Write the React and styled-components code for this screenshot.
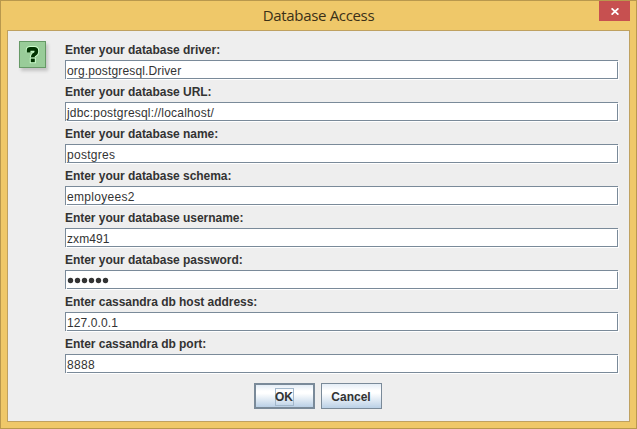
import React from 'react';
import styled, { createGlobalStyle } from 'styled-components';

const GlobalStyle = createGlobalStyle`
  * { box-sizing: border-box; }
  body { margin: 0; overflow: hidden; }
`;

const Window = styled.div`
  width: 637px;
  height: 429px;
  display: flex;
  flex-direction: column;
  padding: 0 6px 6px;
  background: #efc869;
  border: 1px solid #b9984d;
  font-family: "Liberation Sans", Arial, sans-serif;
  color: #333;
`;

const TitleBar = styled.header`
  display: grid;
  grid-template-columns: 31px 1fr 31px;
  height: 29px;
  flex: none;
`;

const Title = styled.h1`
  grid-column: 2;
  margin: 0;
  padding-top: 3px;
  text-align: center;
  font: 400 15px/22px "Open Sans", "Noto Sans", sans-serif;
  letter-spacing: -0.33px;
  color: #3b3018;
`;

const CloseButton = styled.button`
  display: flex;
  align-items: center;
  justify-content: center;
  width: 31px;
  height: 20px;
  padding: 1px 0 0 1px;
  border: 0;
  background: #c75050;
`;

const Dialog = styled.main`
  flex: 1;
  display: flex;
  flex-direction: column;
  padding: 10px 11px 0 11px;
  border: 1px solid #bfa160;
  background: #eee;
`;

const Content = styled.div`
  display: flex;
  gap: 19px;
`;

const IconBox = styled.div`
  width: 27px;
  height: 27px;
  flex: none;
  background: #99cc99;
  border: 1px solid #669966;
  box-shadow: 2px 3px 3px #c4c4c4;
  svg { display: block; }
`;

const Form = styled.div`
  flex: 1;
  display: flex;
  flex-direction: column;
`;

const Field = styled.label`
  display: flex;
  flex-direction: column;
  height: 42px;
`;

const Label = styled.span`
  height: 19px;
  padding-top: 1px;
  font-size: 12px;
  line-height: 17px;
  font-weight: 700;
  white-space: nowrap;
  letter-spacing: -0.035px;
`;

const Input = styled.div`
  position: relative;
  height: 19px;
  padding: 2px 0 0 1px;
  border: 1px solid #7a8a99;
  background: #fff;
  box-shadow: 1px 1px 0 #fff;
  font-size: 12px;
  line-height: 17px;
  white-space: nowrap;
  letter-spacing: ${(p) => p.$spacing}px;

  /* light notches where the bevel's two edges meet */
  &::before, &::after {
    content: "";
    position: absolute;
    width: 1px;
    height: 1px;
    background: #eee;
  }
  &::before { left: 0; bottom: -1px; }
  &::after { right: -1px; top: 0; }
`;

const Dots = styled.svg`
  display: block;
  margin-top: 2px;
`;

const Actions = styled.footer`
  display: flex;
  justify-content: center;
  gap: 6px;
  margin-top: 6px;
  padding-right: 2px;
`;

const Button = styled.button`
  display: flex;
  align-items: center;
  justify-content: center;
  width: 61px;
  height: 26px;
  padding: ${(p) => (p.$primary ? 1 : 2)}px 0 0;
  border: ${(p) => (p.$primary ? 2 : 1)}px solid #7a8a99;
  background: linear-gradient(#e4edf6 0%, #fff 28%, #fff 38%, #bad0e6 100%);
  font: 700 12px/15px "Liberation Sans", Arial, sans-serif;
  color: #333;
`;

const FocusRing = styled.span`
  display: flex;
  justify-content: center;
  width: 19px;
  height: 18px;
  line-height: 17px;
  border: 1px solid #a3b8cc;
`;

const fields = [
  { label: 'Enter your database driver:', value: 'org.postgresql.Driver', spacing: 0.14 },
  { label: 'Enter your database URL:', value: 'jdbc:postgresql://localhost/', spacing: 0.2 },
  { label: 'Enter your database name:', value: 'postgres', spacing: 0.28 },
  { label: 'Enter your database schema:', value: 'employees2', spacing: 0.3 },
  { label: 'Enter your database username:', value: 'zxm491', spacing: 0.1 },
  { label: 'Enter your database password:', secret: 6, spacing: 0 },
  { label: 'Enter cassandra db host address:', value: '127.0.0.1', spacing: 0.1 },
  { label: 'Enter cassandra db port:', value: '8888', spacing: 0.3 },
];

function PasswordDots({ count }) {
  return (
    <Dots width={count * 7 + 2} height="10">
      {Array.from({ length: count }, (_, i) => (
        <circle key={i} cx={3.5 + i * 7} cy="5.5" r="2.7" fill="#333" />
      ))}
    </Dots>
  );
}

function QuestionIcon() {
  const mark = 'M8.6 10.6V8.3Q8.6 6.9 10.4 6.9H14.2Q16.3 6.9 16.3 8.7V9.9Q16.3 11.3 14.8 12.2Q12.8 13.2 12.8 15.3';
  return (
    <svg width="25" height="25" viewBox="0 0 25 25" fill="none">
      <path d={mark} stroke="#ccffcc" strokeWidth="5.6" />
      <rect x="9.8" y="15.8" width="6" height="5.4" fill="#ccffcc" />
      <path d={mark} stroke="#003300" strokeWidth="3.7" />
      <rect x="10.8" y="16.6" width="4" height="3.6" fill="#003300" />
    </svg>
  );
}

export default function App() {
  return (
    <>
      <GlobalStyle />
      <Window>
        <TitleBar>
          <Title>Database Access</Title>
          <CloseButton aria-label="Close">
            <svg width="8" height="7" viewBox="0 0 8 7">
              <path d="M0.6 0.3L7.4 6.7M7.4 0.3L0.6 6.7" stroke="#fff" strokeWidth="1.7" />
            </svg>
          </CloseButton>
        </TitleBar>
        <Dialog>
          <Content>
            <IconBox><QuestionIcon /></IconBox>
            <Form>
              {fields.map((f) => (
                <Field key={f.label}>
                  <Label>{f.label}</Label>
                  <Input $spacing={f.spacing}>
                    {f.secret ? <PasswordDots count={f.secret} /> : f.value}
                  </Input>
                </Field>
              ))}
            </Form>
          </Content>
          <Actions>
            <Button $primary><FocusRing>OK</FocusRing></Button>
            <Button>Cancel</Button>
          </Actions>
        </Dialog>
      </Window>
    </>
  );
}
